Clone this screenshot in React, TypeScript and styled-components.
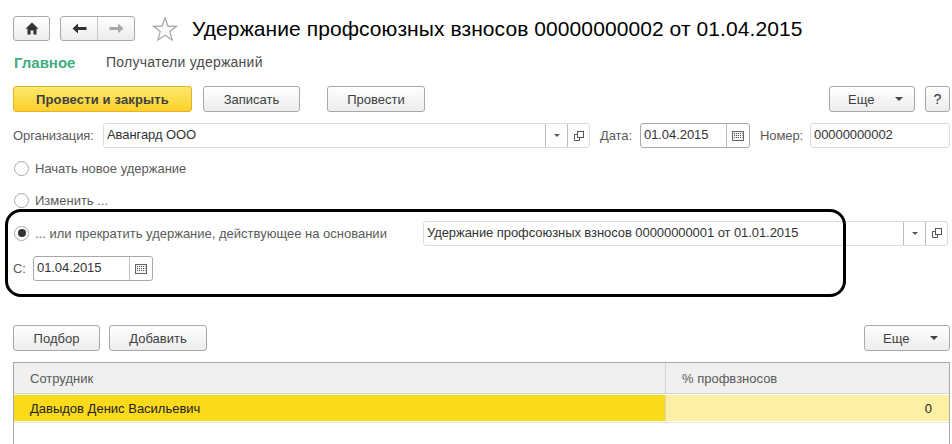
import React from 'react';
import styled, { createGlobalStyle } from 'styled-components';

const GlobalStyle = createGlobalStyle`
    html, body {
        margin: 0;
        padding: 0;
        background: #fff;
    }
    body {
        font-family: 'Liberation Sans', Arial, sans-serif;
        font-size: 13px;
        color: #4b4b4b;
    }
`;

const Page = styled.div`
    position: relative;
    width: 952px;
    height: 444px;
    overflow: hidden;
    padding: 16px 2px 0 13px;
    box-sizing: border-box;
`;

const TopBar = styled.div`
    display: flex;
    align-items: center;
    height: 25px;
`;

const NavButton = styled.div<{ $width: number; $dim?: boolean }>`
    display: flex;
    align-items: center;
    justify-content: center;
    width: ${(p) => p.$width}px;
    height: 100%;
    color: ${(p) => (p.$dim ? '#a9a9a9' : '#333')};
`;

const NavGroup = styled.div<{ $gap?: number }>`
    display: flex;
    height: 25px;
    margin-right: ${(p) => p.$gap ?? 0}px;
    box-sizing: border-box;
    border: 1px solid #a9a9a9;
    border-radius: 3px;
    background: linear-gradient(#ffffff, #ececec);
    ${NavButton} + ${NavButton} {
        border-left: 1px solid #c8c8c8;
    }
`;

const StarIcon = styled.svg`
    width: 26px;
    height: 26px;
    margin: 0 14px 0 17px;
    flex: none;
`;

const Title = styled.h1`
    margin: 0;
    font-size: 21px;
    font-weight: normal;
    color: #000;
    white-space: nowrap;
    letter-spacing: 0.08px;
`;

const Tabs = styled.div`
    display: flex;
    align-items: center;
    height: 14px;
    margin-top: 14px;
`;

const Tab = styled.div<{ $active?: boolean }>`
    font-size: ${(p) => (p.$active ? 15 : 14)}px;
    font-weight: ${(p) => (p.$active ? 'bold' : 'normal')};
    letter-spacing: ${(p) => (p.$active ? 0 : 0.25)}px;
    color: ${(p) => (p.$active ? '#3fae7c' : '#4b4b4b')};
    margin-left: 1px;
    width: ${(p) => (p.$active ? '91px' : 'auto')};
`;

const CommandRow = styled.div`
    display: flex;
    align-items: center;
    margin-top: 17px;
    height: 26px;
`;

const Button = styled.div<{ $width: number; $gap?: number; $primary?: boolean }>`
    display: flex;
    align-items: center;
    justify-content: center;
    flex: none;
    box-sizing: border-box;
    width: ${(p) => p.$width}px;
    height: 26px;
    margin-right: ${(p) => p.$gap ?? 0}px;
    border: 1px solid ${(p) => (p.$primary ? '#e0b32b' : '#a9a9a9')};
    border-radius: 3px;
    background: ${(p) =>
        p.$primary ? 'linear-gradient(#fde96c, #fcd02c)' : 'linear-gradient(#ffffff, #ececec)'};
    font-size: 13px;
    font-weight: ${(p) => (p.$primary ? 'bold' : 'normal')};
    letter-spacing: ${(p) => (p.$primary ? 0.15 : 0)}px;
    color: #3f3f3f;
`;

const MoreButton = styled(Button)`
    justify-content: flex-start;
    padding-left: 18px;
`;

const HelpButton = styled(Button)`
    font-size: 14px;
    color: #333;
`;

const MoreCaret = styled.span`
    width: 0;
    height: 0;
    margin-left: 21px;
    border-left: 4px solid transparent;
    border-right: 4px solid transparent;
    border-top: 4px solid #444;
`;

const Spacer = styled.div`
    flex: 1;
`;

const FieldRow = styled.div`
    display: flex;
    align-items: center;
    height: 25px;
    margin-top: 11px;
`;

const Label = styled.span<{ $width: number }>`
    flex: none;
    width: ${(p) => p.$width}px;
    color: #5a5a5a;
    white-space: nowrap;
    letter-spacing: -0.1px;
`;

const Field = styled.div<{ $width: number; $focus?: boolean; $gap?: number }>`
    display: flex;
    flex: none;
    box-sizing: border-box;
    width: ${(p) => p.$width}px;
    height: 25px;
    margin-right: ${(p) => p.$gap ?? 0}px;
    border: 1px solid ${(p) => (p.$focus ? '#a9a9a9' : '#dcdcdc')};
    border-radius: 3px;
    background: #fff;
`;

const FieldValue = styled.div`
    flex: 1;
    padding: 0 3px;
    line-height: 22px;
    color: #333;
    white-space: nowrap;
    overflow: hidden;
    letter-spacing: -0.07px;
`;

const FieldAction = styled.div<{ $width?: number }>`
    display: flex;
    align-items: center;
    justify-content: center;
    flex: none;
    width: ${(p) => p.$width ?? 21}px;
    border-left: 1px solid #bdbdbd;
    color: #555;
`;

const SmallCaret = styled.span`
    width: 0;
    height: 0;
    border-left: 3px solid transparent;
    border-right: 3px solid transparent;
    border-top: 3px solid #555;
`;

const RadioRow = styled.div<{ $top: number; $height?: number }>`
    display: flex;
    align-items: center;
    height: ${(p) => p.$height ?? 16}px;
    margin-top: ${(p) => p.$top}px;
    color: #5a5a5a;
    white-space: nowrap;
`;

const Radio = styled.span<{ $checked?: boolean }>`
    flex: none;
    display: flex;
    align-items: center;
    justify-content: center;
    box-sizing: border-box;
    width: 15px;
    height: 15px;
    margin: 0 6px 0 1px;
    border: 1px solid #a9a9a9;
    border-radius: 50%;
    background: #fff;
    &::after {
        content: '';
        display: ${(p) => (p.$checked ? 'block' : 'none')};
        width: 8px;
        height: 8px;
        border-radius: 50%;
        background: #333;
    }
`;

const RadioText = styled.span<{ $width?: number }>`
    flex: none;
    width: ${(p) => (p.$width ? `${p.$width}px` : 'auto')};
`;

// hand-drawn annotation frame lying over the form
const Highlight = styled.div`
    position: absolute;
    left: 5px;
    top: 209px;
    width: 841px;
    height: 88px;
    box-sizing: border-box;
    border: 3px solid #000;
    border-radius: 16px;
    pointer-events: none;
`;

const DateRow = styled.div`
    display: flex;
    align-items: center;
    height: 25px;
    margin-top: 10px;
`;

const TableBar = styled.div`
    display: flex;
    align-items: center;
    height: 26px;
    margin-top: 44px;
`;

const Table = styled.div`
    margin-top: 11px;
    height: 90px;
    border: 1px solid #a9a9a9;
    border-bottom: none;
    box-sizing: border-box;
`;

const TableRow = styled.div<{ $header?: boolean }>`
    display: grid;
    grid-template-columns: 651px 1fr;
    height: ${(p) => (p.$header ? 30 : 26)}px;
    margin-bottom: ${(p) => (p.$header ? 1 : 0)}px;
    padding-bottom: ${(p) => (p.$header ? 0 : 1)}px;
    border-bottom: ${(p) => (p.$header ? '1px solid #d4d4d4' : '1px solid #e4e4e4')};
`;

const Cell = styled.div<{ $bg: string; $right?: boolean; $dark?: boolean; $divider?: boolean }>`
    display: flex;
    align-items: center;
    justify-content: ${(p) => (p.$right ? 'flex-end' : 'flex-start')};
    padding: ${(p) => (p.$right ? '0 17px 0 0' : '0 0 0 16px')};
    background: ${(p) => p.$bg};
    color: ${(p) => (p.$dark ? '#222' : '#5a5a5a')};
    border-left: ${(p) => (p.$divider ? '1px solid #d4d4d4' : 'none')};
`;

const HomeIcon = () => (
    <svg width="14" height="13" viewBox="0 0 14 13">
        <path d="M7 0.5 L0.5 6.8 L2.5 6.8 L2.5 12.5 L5.6 12.5 L5.6 8.5 L8.4 8.5 L8.4 12.5 L11.5 12.5 L11.5 6.8 L13.5 6.8 Z" fill="#333" />
    </svg>
);

const ArrowIcon: React.FC<{ flip?: boolean }> = ({ flip }) => (
    <svg width="15" height="11" viewBox="0 0 15 11" style={flip ? { transform: 'scaleX(-1)' } : undefined}>
        <path d="M0.5 5.5 L6 0.5 L6 4 L14.5 4 L14.5 7 L6 7 L6 10.5 Z" fill="currentColor" />
    </svg>
);

const CalendarIcon = () => (
    <svg width="12" height="10" viewBox="0 0 12 10">
        <rect x="0.5" y="0.5" width="11" height="9" fill="#f4f4f4" stroke="#666" />
        <path d="M2 2.5h1M4 2.5h1M6 2.5h1M8 2.5h1M10 2.5h0.5M2 4.5h1M4 4.5h1M6 4.5h1M8 4.5h1M10 4.5h0.5M2 6.5h1M4 6.5h1M6 6.5h1M8 6.5h1M10 6.5h0.5" stroke="#555" />
    </svg>
);

const OpenIcon = () => (
    <svg width="10" height="10" viewBox="0 0 10 10" fill="none" stroke="#555">
        <rect x="3.5" y="0.5" width="6" height="6" />
        <path d="M3 3.5H0.5V9.5H5.5V7" />
    </svg>
);

const SelectActions = () => (
    <>
        <FieldAction>
            <SmallCaret />
        </FieldAction>
        <FieldAction>
            <OpenIcon />
        </FieldAction>
    </>
);

const App: React.FC = () => (
    <Page>
        <GlobalStyle />
        <TopBar>
            <NavGroup $gap={10}>
                <NavButton $width={35}>
                    <HomeIcon />
                </NavButton>
            </NavGroup>
            <NavGroup>
                <NavButton $width={36}>
                    <ArrowIcon />
                </NavButton>
                <NavButton $width={36} $dim>
                    <ArrowIcon flip />
                </NavButton>
            </NavGroup>
            <StarIcon viewBox="0 0 26 26">
                <path
                    d="M13 2 L16 10 L24.5 10.3 L17.8 15.6 L20.2 24 L13 19.2 L5.8 24 L8.2 15.6 L1.5 10.3 L10 10 Z"
                    fill="#fafafa"
                    stroke="#a9a9a9"
                    strokeWidth="1.3"
                />
            </StarIcon>
            <Title>Удержание профсоюзных взносов 00000000002 от 01.04.2015</Title>
        </TopBar>

        <Tabs>
            <Tab $active>Главное</Tab>
            <Tab>Получатели удержаний</Tab>
        </Tabs>

        <CommandRow>
            <Button $width={179} $gap={11} $primary>
                Провести и закрыть
            </Button>
            <Button $width={97} $gap={27}>
                Записать
            </Button>
            <Button $width={98}>Провести</Button>
            <Spacer />
            <MoreButton $width={86} $gap={10}>
                Еще
                <MoreCaret />
            </MoreButton>
            <HelpButton $width={25}>?</HelpButton>
        </CommandRow>

        <FieldRow>
            <Label $width={90}>Организация:</Label>
            <Field $width={487} $gap={10}>
                <FieldValue>Авангард ООО</FieldValue>
                <SelectActions />
            </Field>
            <Label $width={40}>Дата:</Label>
            <Field $width={110} $focus $gap={10}>
                <FieldValue>01.04.2015</FieldValue>
                <FieldAction $width={22}>
                    <CalendarIcon />
                </FieldAction>
            </Field>
            <Label $width={50}>Номер:</Label>
            <Field $width={140}>
                <FieldValue>00000000002</FieldValue>
            </Field>
        </FieldRow>

        <RadioRow $top={12}>
            <Radio />
            Начать новое удержание
        </RadioRow>
        <RadioRow $top={16}>
            <Radio />
            Изменить ...
        </RadioRow>
        <RadioRow $top={12} $height={26}>
            <Radio $checked />
            <RadioText $width={388}>... или прекратить удержание, действующее на основании</RadioText>
            <Field $width={525}>
                <FieldValue>Удержание профсоюзных взносов 00000000001 от 01.01.2015</FieldValue>
                <SelectActions />
            </Field>
        </RadioRow>
        <DateRow>
            <Label $width={20}>С:</Label>
            <Field $width={120} $focus>
                <FieldValue>01.04.2015</FieldValue>
                <FieldAction $width={22}>
                    <CalendarIcon />
                </FieldAction>
            </Field>
        </DateRow>

        <TableBar>
            <Button $width={87} $gap={9}>
                Подбор
            </Button>
            <Button $width={98}>Добавить</Button>
            <Spacer />
            <MoreButton $width={86}>
                Еще
                <MoreCaret />
            </MoreButton>
        </TableBar>

        <Table>
            <TableRow $header>
                <Cell $bg="#f0f0f0">Сотрудник</Cell>
                <Cell $bg="#f0f0f0" $divider>
                    % профвзносов
                </Cell>
            </TableRow>
            <TableRow>
                <Cell $bg="#fbda1c" $dark>
                    Давыдов Денис Васильевич
                </Cell>
                <Cell $bg="#fdf0a5" $right $dark $divider>
                    0
                </Cell>
            </TableRow>
        </Table>

        <Highlight />
    </Page>
);

export default App;
